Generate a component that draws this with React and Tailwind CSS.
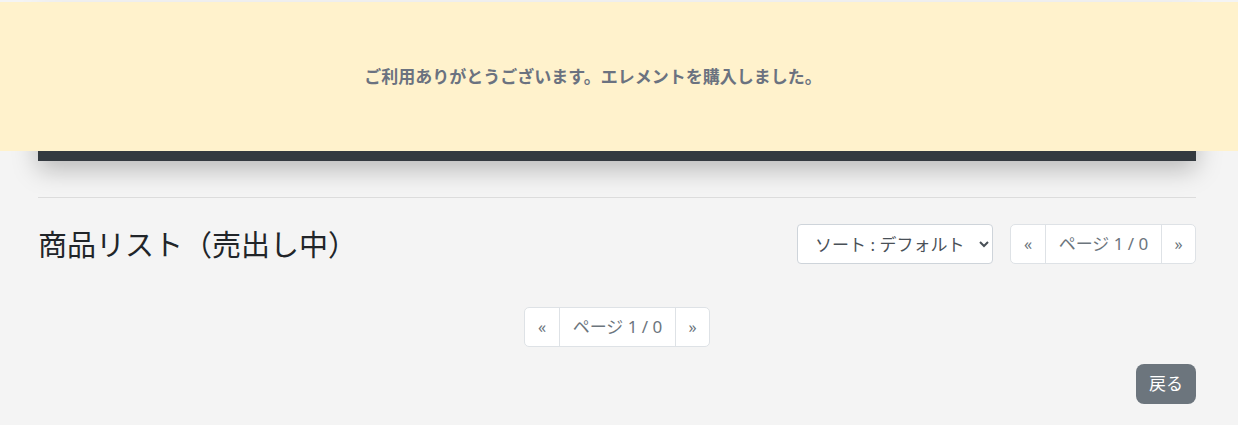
import React from 'react';

const font = { fontFamily: '"Noto Sans", "Noto Sans CJK JP", sans-serif' };

const Pager = () => (
  <div className="flex h-[40px] rounded-[5px] border border-[#dee2e6] bg-white text-[17px] text-[#6c757d]">
    <span className="flex w-[35px] items-center justify-center border-r border-[#dee2e6] text-[16px]">«</span>
    <span className="flex w-[116px] items-center justify-center border-r border-[#dee2e6]">ページ 1 / 0</span>
    <span className="flex w-[33px] items-center justify-center text-[16px]">»</span>
  </div>
);

export default function App() {
  return (
    <div className="relative min-h-[425px] bg-[#f4f4f4]" style={font}>
      {/* Alert banner over the nav */}
      <div className="absolute left-0 right-0 top-[2px] z-10 flex h-[149px] items-center justify-center bg-[#fff2cc] pr-[52px] text-[17px] font-bold text-[#6b7280]">
        ご利用ありがとうございます。エレメントを購入しました。
      </div>

      <div className="mx-[38px] w-[1158px] pt-[10px]">
        <div className="h-[151px] bg-[#343a40] shadow-[0_8px_24px_rgba(0,0,0,0.25)]" />

        <hr className="mt-[36px] border-t border-[#dcdcdc]" />

        <div className="mt-[26px] flex items-center justify-between">
          <h2 className="text-[29px] font-normal leading-none text-[#212529]">商品リスト（売出し中）</h2>
          <div className="flex items-center gap-[17px]">
            <select className="h-[40px] w-[196px] rounded-[4px] border border-[#ced4da] bg-white pl-[13px] pr-[6px] text-[17px] text-[#495057]">
              <option>ソート : デフォルト</option>
            </select>
            <Pager />
          </div>
        </div>

        <div className="mt-[43px] flex justify-center">
          <Pager />
        </div>

        <div className="mt-[17px] flex justify-end">
          <button className="h-[40px] w-[60px] rounded-[8px] bg-[#6c757d] text-[17px] text-white">戻る</button>
        </div>
      </div>
    </div>
  );
}
